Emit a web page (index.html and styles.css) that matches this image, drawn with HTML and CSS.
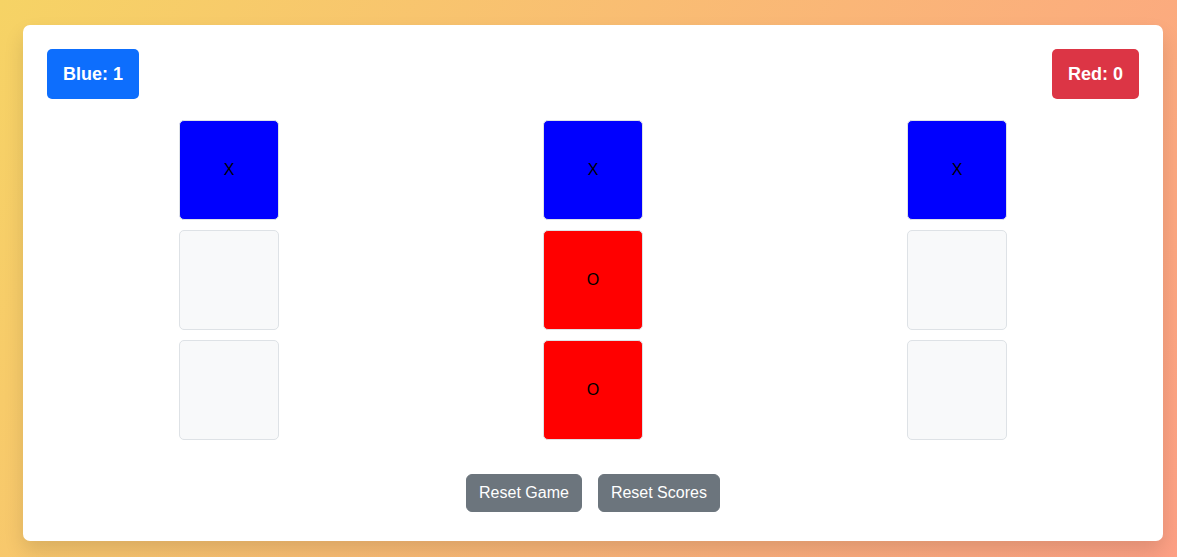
FILE: index.html
```html
<!DOCTYPE html>
<html lang="en">
<head>
<meta charset="utf-8">
<title>Tic Tac Toe</title>
<link rel="stylesheet" href="styles.css">
</head>
<body>
<main class="card">
  <header class="scores">
    <div class="badge badge-blue">Blue: 1</div>
    <div class="badge badge-red">Red: 0</div>
  </header>
  <section class="board">
    <div class="column">
      <div class="cell cell-x">X</div>
      <div class="cell"></div>
      <div class="cell"></div>
    </div>
    <div class="column">
      <div class="cell cell-x">X</div>
      <div class="cell cell-o">O</div>
      <div class="cell cell-o">O</div>
    </div>
    <div class="column">
      <div class="cell cell-x">X</div>
      <div class="cell"></div>
      <div class="cell"></div>
    </div>
  </section>
  <footer class="actions">
    <button class="btn">Reset Game</button>
    <button class="btn">Reset Scores</button>
  </footer>
</main>
</body>
</html>
```
FILE: styles.css
```css
html, body {
  margin: 0;
  height: 100%;
}
body {
  box-sizing: border-box;
  padding: 25px 14px 16px 23px;
  background: linear-gradient(120deg, #f6d365 0%, #fda085 100%);
  font-family: "Liberation Sans", Arial, sans-serif;
  overflow: hidden;
}
.card {
  box-sizing: border-box;
  height: 516px;
  background: #fff;
  border-radius: 7px;
  box-shadow: 0 10px 20px rgba(0, 0, 0, 0.12);
  padding: 24px 24px 29px;
}
.scores {
  display: flex;
  justify-content: space-between;
  margin-bottom: 21px;
}
.badge {
  height: 50px;
  display: flex;
  align-items: center;
  padding: 0 16px;
  border-radius: 5px;
  color: #fff;
  font-weight: bold;
  font-size: 18px;
}
.badge-blue { background: #0d6efd; }
.badge-red { background: #dc3545; }
.board {
  display: grid;
  grid-template-columns: repeat(3, 1fr);
  margin-bottom: 34px;
}
.column {
  display: flex;
  flex-direction: column;
  align-items: center;
  gap: 10px;
}
.cell {
  box-sizing: border-box;
  width: 100px;
  height: 100px;
  border: 1px solid #dee2e6;
  border-radius: 5px;
  background: #f8f9fa;
  display: flex;
  align-items: center;
  justify-content: center;
  font-size: 16px;
  color: #000;
}
.cell-x { background: #0000ff; }
.cell-o { background: #ff0000; }
.actions {
  display: flex;
  justify-content: center;
  gap: 16px;
}
.btn {
  height: 38px;
  padding: 6px 12px;
  border: 1px solid #6c757d;
  border-radius: 6px;
  background: #6c757d;
  color: #fff;
  font-family: "Liberation Sans", Arial, sans-serif;
  font-size: 16px;
  line-height: 24px;
}
```
